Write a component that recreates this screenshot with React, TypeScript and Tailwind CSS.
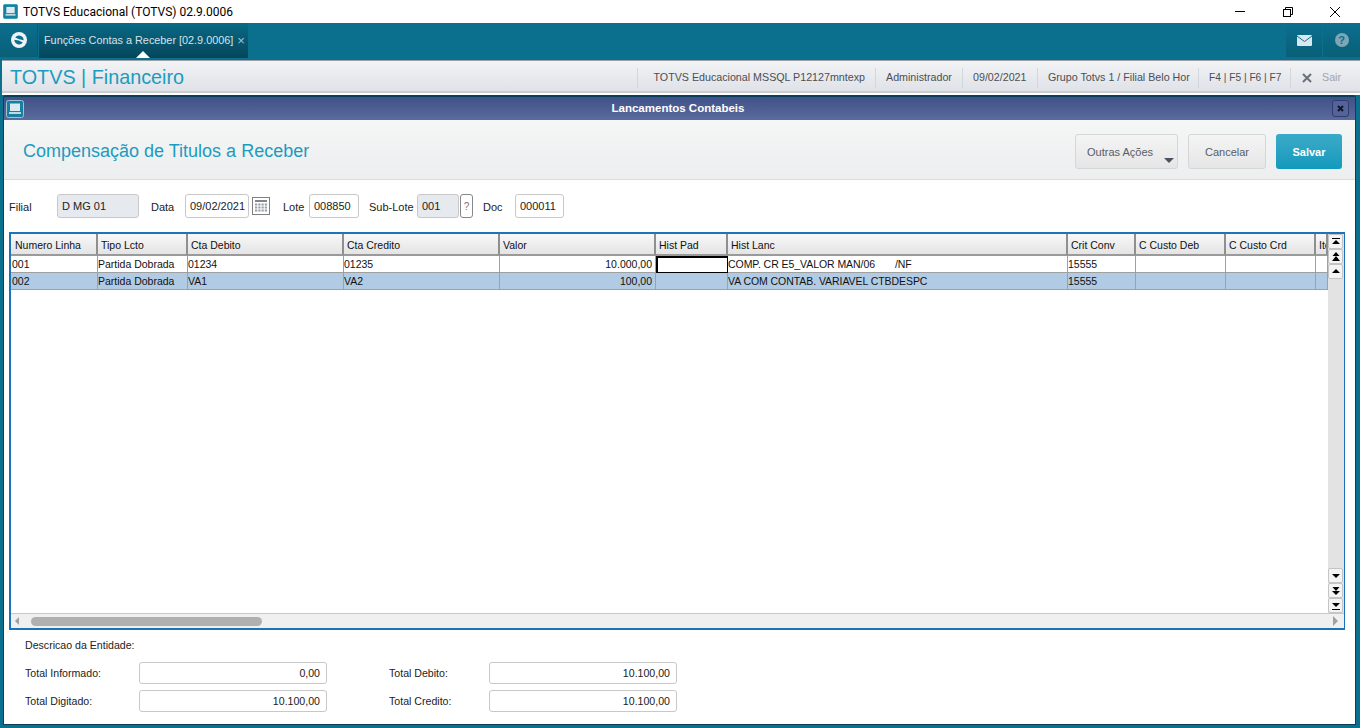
import React from 'react'

const columns = [
  { label: 'Numero Linha', w: 'w-[87px]' },
  { label: 'Tipo Lcto', w: 'w-[90px]' },
  { label: 'Cta Debito', w: 'w-[156px]' },
  { label: 'Cta Credito', w: 'w-[156px]' },
  { label: 'Valor', w: 'w-[156px]' },
  { label: 'Hist Pad', w: 'w-[72px]' },
  { label: 'Hist Lanc', w: 'w-[340px]' },
  { label: 'Crit Conv', w: 'w-[68px]' },
  { label: 'C Custo Deb', w: 'w-[90px]' },
  { label: 'C Custo Crd', w: 'w-[90px]' },
  { label: 'Ite', w: 'w-[12px]' },
]

const rows = [
  ['001', 'Partida Dobrada', '01234', '01235', '10.000,00', '', 'COMP. CR E5_VALOR MAN/06\u00a0\u00a0\u00a0\u00a0\u00a0\u00a0\u00a0/NF', '15555', '', '', ''],
  ['002', 'Partida Dobrada', 'VA1', 'VA2', '100,00', '', 'VA COM CONTAB. VARIAVEL CTBDESPC', '15555', '', '', ''],
]

function ScreenIcon({ size, framed }: { size: number; framed?: boolean }) {
  return (
    <svg width={size} height={size} viewBox="0 0 18 18">
      <rect x="0.5" y="0.5" width="17" height="17" rx="2" fill="#15809f" stroke={framed ? '#9fc0d0' : '#2a93b0'} />
      <rect x="4" y="3.5" width="10" height="7.5" fill="#dbeaf0" />
      <rect x="3" y="12" width="12" height="2" fill="#bcdbe6" />
    </svg>
  )
}

function ScrollBtn({ kind }: { kind: 'top' | 'pgup' | 'up' | 'down' | 'pgdn' | 'bottom' }) {
  const paths: Record<string, React.ReactNode> = {
    top: (
      <>
        <rect x="2" y="2" width="8" height="1" />
        <path d="M6 4 L10 8 H2 Z" />
      </>
    ),
    pgup: (
      <>
        <path d="M6 1 L9.5 5 H2.5 Z" />
        <path d="M6 5 L10 10 H2 Z" />
      </>
    ),
    up: <path d="M6 3 L10 7 H2 Z" />,
    down: <path d="M6 8 L10 4 H2 Z" />,
    pgdn: (
      <>
        <path d="M6 6 L9.5 2 H2.5 Z" />
        <path d="M6 10 L10 6 H2 Z" />
      </>
    ),
    bottom: (
      <>
        <path d="M6 7 L10 3 H2 Z" />
        <rect x="2" y="9" width="8" height="1" />
      </>
    ),
  }
  return (
    <div className="w-[15px] h-[15px] flex items-center justify-center rounded-[2px] border border-[#c4c4c4] bg-[#f4f4f4]">
      <svg width="12" height="12" viewBox="0 0 12 12" fill="#000">
        {paths[kind]}
      </svg>
    </div>
  )
}

function Label({ children, className }: { children: React.ReactNode; className?: string }) {
  return <span className={`pt-[2px] text-[11px] text-[#222] ${className ?? ''}`}>{children}</span>
}

function Field({ value, className }: { value: string; className: string }) {
  return (
    <div className={`h-[24px] flex items-center rounded-[3px] border border-[#c8c8c8] text-[11px] text-[#222] ${className}`}>
      {value}
    </div>
  )
}

function TotalField({ value }: { value: string }) {
  return (
    <div className="w-[188px] h-[22px] pt-[2px] flex items-center justify-end pr-[6px] rounded-[3px] border border-[#c8c8c8] bg-white text-[10.6px] text-[#222]">
      {value}
    </div>
  )
}

function TotalLabel({ children, className }: { children: React.ReactNode; className: string }) {
  return <span className={`text-[10.6px] text-[#222] ${className}`}>{children}</span>
}

export default function App() {
  return (
    <div className="w-[1360px] h-[728px] overflow-hidden flex flex-col bg-[#0b6f8e] font-['Liberation_Sans',Arial,sans-serif]">
      {/* janela do windows */}
      <div className="h-[23px] bg-white flex items-center shrink-0">
        <div className="ml-[3px]">
          <ScreenIcon size={15} />
        </div>
        <span className="ml-[5px] text-[12px] text-black font-['Roboto',sans-serif]">TOTVS Educacional (TOTVS) 02.9.0006</span>
        <div className="ml-auto flex items-center">
          <svg width="12" height="12" viewBox="0 0 12 12" className="mr-[36px]" stroke="#000" fill="none">
            <path d="M1 5.5 H11" />
          </svg>
          <svg width="12" height="12" viewBox="0 0 12 12" className="mr-[35px]" stroke="#000" fill="none">
            <rect x="1.5" y="3.5" width="7" height="7" />
            <path d="M3.5 3.5 V1.5 H10.5 V8.5 H8.5" />
          </svg>
          <svg width="12" height="12" viewBox="0 0 12 12" className="mr-[19px]" stroke="#000" fill="none">
            <path d="M1 1 L11 11 M11 1 L1 11" />
          </svg>
        </div>
      </div>

      {/* barra teal */}
      <div className="h-[37px] shrink-0 flex bg-[#0b6f8e]">
        <div className="w-[38px] h-[34px] flex items-center justify-center bg-gradient-to-b from-[#0b6f8e] to-[#095f78] border-r border-[#0b5a72]">
          <svg width="18" height="18" viewBox="0 0 18 18" fill="none">
            <circle cx="9" cy="9" r="8" fill="#eef4f6" />
            <path d="M5.2 6.6 A4.6 4.6 0 0 1 13.6 9.2 Q9 9 5.2 6.6 Z" fill="#0b6f8e" />
            <path d="M12.8 11.4 A4.6 4.6 0 0 1 4.4 8.8 Q9 9 12.8 11.4 Z" fill="#0b6f8e" />
          </svg>
        </div>
        <div className="ml-[1px] w-[209px] h-[35px] relative flex items-center pl-[5px] bg-gradient-to-b from-[#0a6a86] to-[#05465b]">
          <span className="text-[10.85px] text-[#d5e3e8] whitespace-nowrap">Funções Contas a Receber [02.9.0006]</span>
          <span className="ml-[4px] text-[13px] text-[#a9c3cc] leading-none">×</span>
          <div className="absolute left-[97px] bottom-0 w-0 h-0 border-x-[7px] border-x-transparent border-b-[7px] border-b-white" />
        </div>
        <div className="ml-auto flex">
          <div className="w-[36px] h-[34px] flex items-center justify-center bg-gradient-to-b from-[#0b6f8e] to-[#095f78]">
            <svg width="15" height="11" viewBox="0 0 15 11">
              <rect width="15" height="11" rx="1" fill="#d9e8ee" />
              <path d="M0 1 L7.5 6.5 L15 1" stroke="#0b6f8e" strokeWidth="1" fill="none" />
            </svg>
          </div>
          <div className="ml-[1px] w-[37px] h-[34px] flex items-center justify-center bg-gradient-to-b from-[#0b6f8e] to-[#095f78]">
            <div className="w-[14px] h-[14px] rounded-full bg-[#7fa6b4] flex items-center justify-center text-[11px] font-bold text-[#0b6f8e]">?</div>
          </div>
        </div>
      </div>

      {/* cabecalho do modulo */}
      <div className="h-[35px] shrink-0 ml-[2px] bg-white flex flex-col">
        <div className="h-[33px] pt-[3px] bg-gradient-to-b from-[#f2f3f5] to-[#dfe2e7] border-t border-[#9aa0a6] border-b-2 border-b-[#c9ccd0] flex items-center">
          <span className="ml-[8px] text-[19.8px] text-[#1a9cc0]">TOTVS | Financeiro</span>
          <div className="ml-auto flex items-center h-[20px] text-[10.7px] text-[#4a4f55]">
            <div className="h-full flex items-center pl-[16px] pr-[10px] whitespace-nowrap border-l border-[#d3d6da]">TOTVS Educacional MSSQL P12127mntexp</div>
            <div className="h-full w-[87px] flex items-center pl-[10px] border-l border-[#d3d6da]">Administrador</div>
            <div className="h-full w-[75px] flex items-center pl-[10px] border-l border-[#d3d6da]">09/02/2021</div>
            <div className="h-full w-[161px] flex items-center pl-[10px] whitespace-nowrap border-l border-[#d3d6da]">Grupo Totvs 1 / Filial Belo Hor</div>
            <div className="h-full w-[92px] flex items-center pl-[10px] text-[10.2px] border-l border-[#d3d6da]">F4 | F5 | F6 | F7</div>
            <div className="h-full w-[70px] flex items-center pl-[11px] border-l border-[#d3d6da]">
              <svg width="10" height="10" viewBox="0 0 10 10" stroke="#6a7077" strokeWidth="2" fill="none">
                <path d="M1 1 L9 9 M9 1 L1 9" />
              </svg>
              <span className="ml-[10px] text-[#a0a4a8]">Sair</span>
            </div>
          </div>
        </div>
      </div>

      {/* dialogo */}
      <div className="ml-[3px] mr-[4px] h-[630px] flex flex-col bg-white border-x border-b border-t-[2px] border-[#0b3f58] rounded-t-[3px]">
        <div className="h-[23px] shrink-0 flex items-center bg-gradient-to-b from-[#3f5189] to-[#5c6a9c]">
          <div className="ml-[2px] flex">
            <ScreenIcon size={18} framed />
          </div>
          <span className="flex-1 text-center text-[11.5px] font-bold text-white">Lancamentos Contabeis</span>
          <div className="mr-[6px] w-[17px] h-[17px] rounded-[3px] border border-[#2e3d6c] bg-[#54639a] flex items-center justify-center">
            <svg width="7" height="7" viewBox="0 0 7 7" stroke="#10162c" strokeWidth="2" fill="none">
              <path d="M1 1 L6 6 M6 1 L1 6" />
            </svg>
          </div>
        </div>

        <div className="h-[60px] shrink-0 pt-[3px] flex items-center bg-gradient-to-b from-[#f5f6f6] to-[#eceeef] border-b border-[#dcdcdc]">
          <span className="ml-[19px] text-[18px] text-[#1a9cc0]">Compensação de Titulos a Receber</span>
          <div className="ml-auto mr-[13px] flex items-center">
            <div className="relative w-[103px] h-[35px] rounded-[3px] border border-[#d6d6d6] bg-gradient-to-b from-[#f4f4f4] to-[#e6e6e6] flex items-center pl-[11px] pt-[2px] text-[11px] text-[#585c68]">
              Outras Ações
              <div className="absolute right-[3px] bottom-[5px] w-0 h-0 border-x-[5px] border-x-transparent border-t-[5px] border-t-[#4e5260]" />
            </div>
            <div className="ml-[10px] w-[78px] h-[35px] pt-[2px] rounded-[3px] border border-[#d6d6d6] bg-gradient-to-b from-[#f4f4f4] to-[#e6e6e6] flex items-center justify-center text-[11px] text-[#585c68]">
              Cancelar
            </div>
            <div className="ml-[10px] w-[66px] h-[35px] pt-[2px] rounded-[3px] bg-gradient-to-b from-[#3aaac8] to-[#0f9abd] flex items-center justify-center text-[11px] font-bold text-white">
              Salvar
            </div>
          </div>
        </div>

        {/* filtros */}
        <div className="h-[52px] shrink-0 flex items-center pl-[5px]">
          <Label className="w-[48px]">Filial</Label>
          <Field value="D MG 01" className="w-[82px] pl-[4px] bg-[#e6e9ee]" />
          <Label className="ml-[12px] w-[34px]">Data</Label>
          <Field value="09/02/2021" className="w-[64px] pl-[4px] bg-white" />
          <svg width="18" height="18" viewBox="0 0 18 18" className="ml-[3px]">
            <rect x="0.5" y="0.5" width="17" height="17" fill="#fff" stroke="#000" strokeDasharray="1 1" />
            <path d="M3 4 H15" stroke="#7f858c" strokeWidth="2" />
            <path d="M3 7.5 H15 M3 10.5 H15 M3 13.5 H15" stroke="#9a9fa6" strokeWidth="2" strokeDasharray="2.25 1" />
          </svg>
          <Label className="ml-[13px] w-[26px]">Lote</Label>
          <Field value="008850" className="w-[50px] pl-[4px] bg-white" />
          <Label className="ml-[10px] w-[48px]">Sub-Lote</Label>
          <Field value="001" className="w-[42px] pl-[4px] bg-[#e6e9ee]" />
          <div className="ml-[1px] w-[13px] h-[24px] rounded-[3px] border border-[#888] flex items-center justify-center text-[10px] text-[#777]">?</div>
          <Label className="ml-[10px] w-[32px]">Doc</Label>
          <Field value="000011" className="w-[49px] pl-[4px] bg-white" />
        </div>

        {/* grade */}
        <div className="ml-[5px] w-[1336px] h-[398px] shrink-0 flex flex-col border-t-[2px] border-l-2 border-r border-b-[2px] border-[#1c74b8]">
          <div className="flex-1 min-h-0 flex">
            <div className="flex-1 min-w-0 overflow-hidden">
              <div className="flex h-[22px]">
                {columns.map((c, i) => (
                  <div
                    key={c.label}
                    className={`${c.w} shrink-0 flex items-center ${i === 0 ? 'pl-[4px]' : 'pl-[3px]'} pt-[4px] overflow-hidden whitespace-nowrap text-[10.5px] text-[#111] bg-gradient-to-b from-[#f8f8f8] to-[#e4e4e4] border-r-2 border-r-[#8f8f8f] border-b-2 border-b-[#9a9a9a]`}
                  >
                    {c.label}
                  </div>
                ))}
              </div>
              {rows.map((row, r) => (
                <div key={r} className="flex h-[17px]">
                  {row.map((cell, i) => (
                    <div
                      key={i}
                      className={`${columns[i].w} shrink-0 h-full pt-[1px] flex items-center overflow-hidden whitespace-nowrap text-[10.5px] text-[#111] border-r border-b border-[#a0a0a0] ${r === 1 ? 'bg-[#b2cbe4]' : 'bg-white'} ${i === 4 ? 'justify-end pr-[3px]' : i === 0 ? 'pl-[1px]' : ''} ${i === 6 ? 'tracking-[-0.06px]' : ''} ${r === 0 && i === 5 ? 'border-2 border-black' : ''}`}
                    >
                      {cell}
                    </div>
                  ))}
                </div>
              ))}
            </div>
            <div className="w-[16px] shrink-0 bg-[#e3e3e3] flex flex-col items-start">
              <ScrollBtn kind="top" />
              <ScrollBtn kind="pgup" />
              <ScrollBtn kind="up" />
              <div className="flex-1" />
              <ScrollBtn kind="down" />
              <ScrollBtn kind="pgdn" />
              <ScrollBtn kind="bottom" />
            </div>
          </div>
          <div className="h-[15px] shrink-0 flex items-center bg-[#f0f0f0] border-t border-[#c8c8c8]">
            <div className="ml-[4px] w-0 h-0 border-y-[4px] border-y-transparent border-r-[4px] border-r-[#a0a0a0]" />
            <div className="ml-[12px] w-[231px] h-[9px] rounded-full bg-[#b0b0b0]" />
            <div className="ml-auto mr-[6px] w-0 h-0 border-y-[5px] border-y-transparent border-l-[5px] border-l-[#a0a0a0]" />
          </div>
        </div>

        {/* totais */}
        <div className="pl-[21px] pt-[7px]">
          <TotalLabel className="block h-[17px] leading-[17px]">Descricao da Entidade:</TotalLabel>
          <div className="mt-[8px] flex flex-col gap-[6px]">
            <div className="flex items-center">
              <TotalLabel className="w-[114px] pt-[2px]">Total Informado:</TotalLabel>
              <TotalField value="0,00" />
              <TotalLabel className="ml-[62px] w-[100px] pt-[2px]">Total Debito:</TotalLabel>
              <TotalField value="10.100,00" />
            </div>
            <div className="flex items-center">
              <TotalLabel className="w-[114px] pt-[2px]">Total Digitado:</TotalLabel>
              <TotalField value="10.100,00" />
              <TotalLabel className="ml-[62px] w-[100px] pt-[2px]">Total Credito:</TotalLabel>
              <TotalField value="10.100,00" />
            </div>
          </div>
        </div>
      </div>
    </div>
  )
}
